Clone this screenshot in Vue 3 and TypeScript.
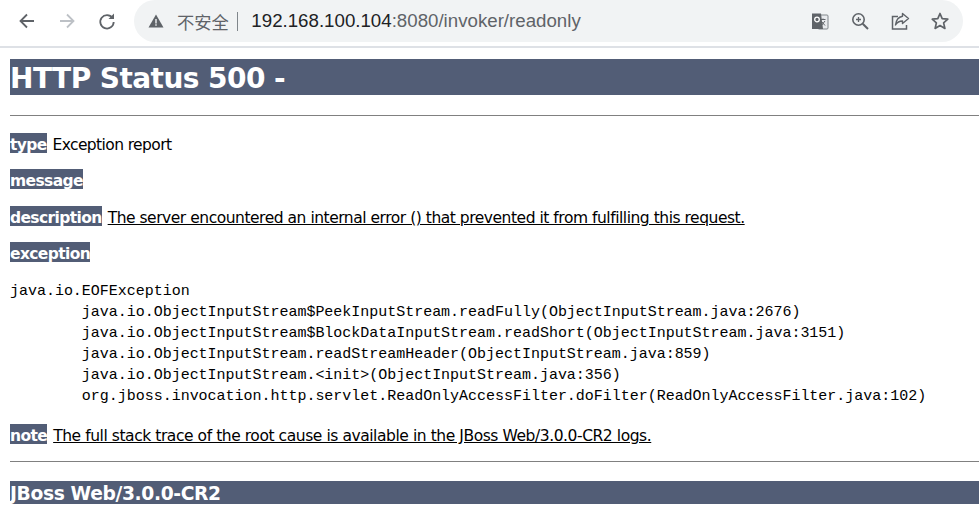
<script setup lang="ts">
const stack: string[] = [
  'java.io.ObjectInputStream$PeekInputStream.readFully(ObjectInputStream.java:2676)',
  'java.io.ObjectInputStream$BlockDataInputStream.readShort(ObjectInputStream.java:3151)',
  'java.io.ObjectInputStream.readStreamHeader(ObjectInputStream.java:859)',
  'java.io.ObjectInputStream.<init>(ObjectInputStream.java:356)',
  'org.jboss.invocation.http.servlet.ReadOnlyAccessFilter.doFilter(ReadOnlyAccessFilter.java:102)'
]
</script>

<template>
  <div class="browser">
    <header class="toolbar">
      <button class="nav">
        <svg viewBox="0 0 20 20" width="20" height="20"><path d="M17 10H4M10 3.500 3.500 10l6.500 6.500" fill="none" stroke="#5f6368" stroke-width="1.800" /></svg>
      </button>
      <button class="nav">
        <svg viewBox="0 0 20 20" width="20" height="20"><path d="M3 10h13M10 3.500l6.500 6.500L10 16.500" fill="none" stroke="#bdc1c6" stroke-width="1.800" /></svg>
      </button>
      <button class="nav">
        <svg viewBox="0 0 20 20" width="20" height="20"><path d="M15.500 7A6.700 6.700 0 1 0 16.700 11" fill="none" stroke="#5f6368" stroke-width="1.800" /><path d="M17 2.500V8h-5.500z" fill="#5f6368" /></svg>
      </button>
      <div class="omnibox">
        <svg class="warn" viewBox="0 0 16 16" width="16" height="16"><path d="M8 1.500 15.500 14.500H.5z" fill="#5f6368" /><path d="M7.300 6h1.400v4.500H7.300zM7.300 11.300h1.400v1.400H7.300z" fill="#f1f3f4" /></svg>
        <span class="insecure">不安全</span>
        <span class="sep"></span>
        <span class="url"><span class="host">192.168.100.104</span>:8080/invoker/readonly</span>
        <span class="actions">
          <svg viewBox="0 0 20 20" width="20" height="20">
            <rect x="8" y="4" width="10" height="14" rx="1" fill="#e8eaed" stroke="#80868b" />
            <path d="M10.500 8.500h5M13 7.500v1M11 15l4-5M11.500 10.500l3.500 4" fill="none" stroke="#5f6368" />
            <path d="M2 2.500h9l2 15.500H2z" fill="#5f6368" />
            <circle cx="7" cy="8.500" r="2.300" fill="none" stroke="#fff" stroke-width="1.300" />
          </svg>
          <svg viewBox="0 0 20 20" width="20" height="20">
            <circle cx="8.500" cy="8.500" r="5.700" fill="none" stroke="#5f6368" stroke-width="1.600" />
            <path d="M12.700 12.700 18 18" stroke="#5f6368" stroke-width="2" />
            <path d="M6 8.500h5M8.500 6v5" stroke="#5f6368" stroke-width="1.300" />
          </svg>
          <svg viewBox="0 0 20 20" width="20" height="20">
            <path d="M8 5.500H2.500V18h14v-4" fill="none" stroke="#5f6368" stroke-width="1.500" />
            <path d="M12.500 2.500 18.500 7.500l-6 5V10C9 10 7 11.500 5.500 14 6 9.500 8.500 6 12.500 5.200z" fill="none" stroke="#5f6368" stroke-width="1.400" stroke-linejoin="round" />
          </svg>
          <svg viewBox="0 0 20 20" width="20" height="20">
            <path d="M10 2.500l2.200 5.200 5.600.5-4.200 3.700 1.300 5.500L10 14.500l-4.900 2.900 1.300-5.500L2.200 8.200l5.600-.5z" fill="none" stroke="#5f6368" stroke-width="1.700" stroke-linejoin="round" />
          </svg>
        </span>
      </div>
    </header>

    <main class="page">
      <h1>HTTP Status 500 - </h1>
      <hr class="rule-top" />
      <p class="type"><b>type</b> Exception report</p>
      <p><b>message</b> <u></u></p>
      <p><b>description</b> <u>The server encountered an internal error () that prevented it from fulfilling this request.</u></p>
      <p><b>exception</b></p>
      <pre class="trace">java.io.EOFException
<template v-for="line in stack" :key="line">	{{ line }}
</template></pre>
      <p class="note"><b>note</b> <u>The full stack trace of the root cause is available in the JBoss Web/3.0.0-CR2 logs.</u></p>
      <hr class="rule-bottom" />
      <h3>JBoss Web/3.0.0-CR2</h3>
    </main>
  </div>
</template>

<style>
html, body {
  margin: 0;
  overflow: hidden;
  background: #fff;
}
</style>

<style scoped>
.browser {
  width: 979px;
  height: 516px;
  overflow: hidden;
  font-family: 'DejaVu Sans', Tahoma, sans-serif;
}

/** toolbar */
.toolbar {
  display: flex;
  align-items: center;
  height: 48px;
  box-sizing: border-box;
  border-bottom: 2px solid #dee1e6;
  padding: 0 16px 4px 17px;
}
.nav {
  display: flex;
  align-items: center;
  justify-content: center;
  width: 20px;
  height: 20px;
  padding: 0;
  margin-right: 20px;
  border: 0;
  background: none;
}
.omnibox {
  display: flex;
  align-items: center;
  flex: 1;
  height: 42px;
  margin-left: -3px;
  padding: 0 14px;
  background: #f1f3f4;
  border-radius: 21px;
}
.warn {
  margin-right: 13px;
}
.insecure {
  font-family: 'Noto Sans CJK SC', sans-serif;
  font-size: 17.300px;
  color: #5f6368;
}
.sep {
  width: 1.500px;
  height: 19px;
  margin: 0 13px 0 8px;
  background: #80868b;
}
.url {
  font-family: 'Liberation Sans', sans-serif;
  font-size: 18.700px;
  color: #5f6368;
}
.host {
  color: #202124;
}
.actions {
  display: flex;
  gap: 20px;
  margin-left: auto;
  margin-right: -1px;
}

/** page */
.page {
  padding-left: 10px;
  color: #000;
  font-size: 16px;
}
h1 {
  margin: 11px 0 0;
  height: 36px;
  line-height: 39px;
  font-size: 28px;
  font-weight: bold;
  letter-spacing: -0.550px;
  color: #fff;
  background: #525d76;
}
.rule-top {
  margin: 20px 0 16.900px;
}
hr {
  height: 1px;
  border: 0;
  background: #808080;
}
p {
  margin: 0 0 16px;
  height: 20.500px;
  line-height: 24px;
  font-size: 15.500px;
  letter-spacing: -0.470px;
  white-space: nowrap;
}
b {
  display: inline-block;
  height: 20px;
  margin-right: 1.500px;
  color: #fff;
  background: #525d76;
  letter-spacing: -0.620px;
}
.type {
  letter-spacing: -0.600px;
}
.trace {
  margin: 0 0 17px;
  padding-top: 2px;
  font-family: 'Liberation Mono', monospace;
  font-size: 15px;
  line-height: 21px;
  letter-spacing: -0.020px;
  tab-size: 8;
}
.note {
  margin-bottom: 16.500px;
  letter-spacing: -0.435px;
}
.rule-bottom {
  margin: 0 0 19px;
}
h3 {
  margin: 0;
  height: 23px;
  line-height: 25px;
  font-size: 18.700px;
  font-weight: bold;
  letter-spacing: -0.370px;
  color: #fff;
  background: #525d76;
}
</style>
